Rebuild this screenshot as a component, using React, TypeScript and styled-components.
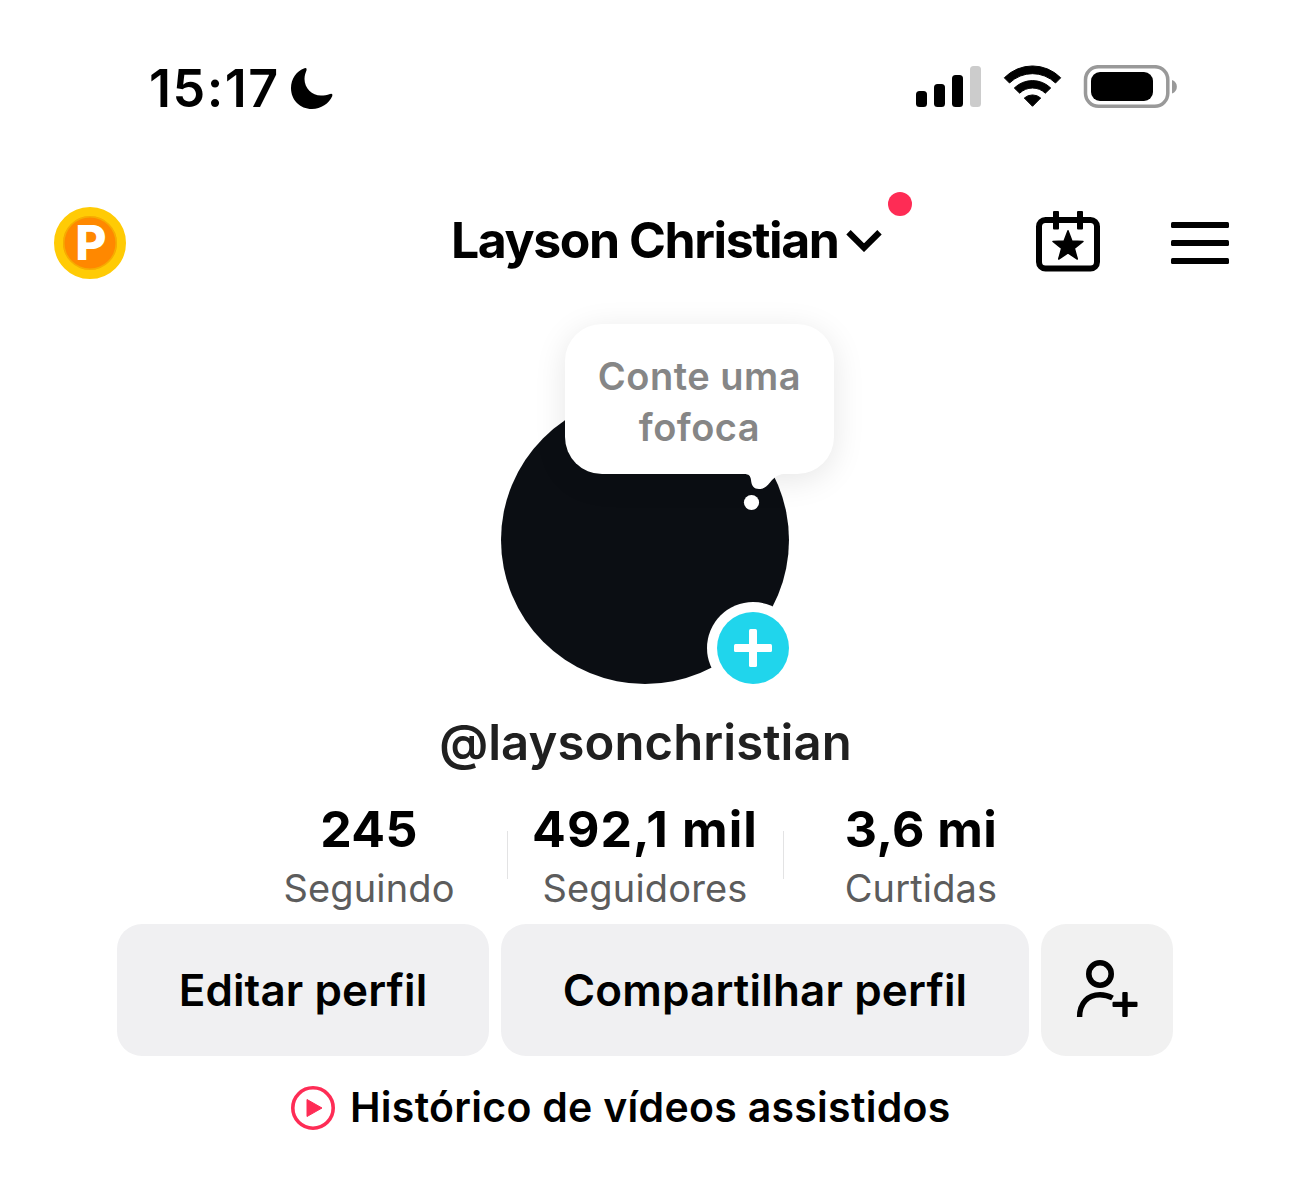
import React from "react";
import styled, { createGlobalStyle } from "styled-components";

const GlobalStyle = createGlobalStyle`
  * { box-sizing: border-box; }
  body { margin: 0; background: #fff; }
`;

const Page = styled.main`
  width: 1290px;
  height: 1193px;
  overflow: hidden;
  display: flex;
  flex-direction: column;
  align-items: center;
  background: #fff;
  color: #000;
  font-family: Inter, "Liberation Sans", sans-serif;
`;

const Label = styled.span<{ $size: number; $weight: number; $track?: number; $color?: string; $line?: number }>`
  font-size: ${(p) => p.$size}px;
  font-weight: ${(p) => p.$weight};
  letter-spacing: ${(p) => p.$track ?? 0}px;
  color: ${(p) => p.$color ?? "#000"};
  line-height: ${(p) => p.$line ?? 60}px;
  white-space: nowrap;
`;

const Icon = styled.svg`
  display: block;
  flex: none;
`;

const StatusBar = styled.header`
  width: 100%;
  height: 176px;
  padding: 58px 113px 0 149px;
  display: flex;
  justify-content: space-between;
`;

const Clock = styled(Label)`
  padding-top: 3px;
`;

const Cluster = styled.div<{ $gap: number }>`
  display: flex;
  height: 58px;
  align-items: center;
  gap: ${(p) => p.$gap}px;
`;

const NavBar = styled.nav`
  width: 100%;
  height: 134px;
  padding: 0 61px 0 54px;
  display: grid;
  grid-template-columns: 397px 1fr auto;
  align-items: center;
`;

const Coin = styled.div`
  width: 72px;
  height: 72px;
  border-radius: 50%;
  border: 9px solid #ffcb05;
  background: #ff8800;
  box-shadow: inset 0 0 0 1.5px #f5ae00;
  display: flex;
  align-items: center;
  justify-content: center;
  padding-left: 2px;
`;

const Account = styled.div`
  position: relative;
  width: 461px;
  display: flex;
  align-items: center;
  justify-content: space-between;
  padding-right: 30px;
  margin-top: -7px;
`;

const NoticeDot = styled.i`
  position: absolute;
  right: 0;
  top: -18px;
  width: 24px;
  height: 24px;
  border-radius: 50%;
  background: #fe2c55;
`;

const AvatarArea = styled.section`
  position: relative;
  width: 288px;
  height: 288px;
  margin-top: 86px;
`;

const Avatar = styled.div`
  width: 288px;
  height: 288px;
  border-radius: 50%;
  background: #0b0e13;
`;

const Bubble = styled.div`
  position: absolute;
  left: 64px;
  top: -72px;
  width: 269px;
  height: 150px;
  border-radius: 37px;
  background: #fff;
  box-shadow: 0 6px 32px rgba(0, 0, 0, 0.1);
  display: flex;
  flex-direction: column;
  align-items: center;
  padding-top: 27px;
`;

const Tail = styled.svg`
  position: absolute;
  left: 176px;
  top: 149px;
`;

const AddBadge = styled.div`
  position: absolute;
  right: 0;
  bottom: 0;
  width: 72px;
  height: 72px;
  border-radius: 50%;
  background: #20d5ec;
  box-shadow: 0 0 0 10px #fff;
  display: flex;
  align-items: center;
  justify-content: center;
`;

const Handle = styled.div`
  height: 115px;
  padding: 29px 0 0 1px;
`;

const Stats = styled.section`
  display: grid;
  grid-template-columns: repeat(3, 276px);
  height: 125px;
`;

const Stat = styled.div<{ $divided: boolean }>`
  display: flex;
  flex-direction: column;
  align-items: center;
  background: ${(p) => (p.$divided ? "linear-gradient(#e3e3e4, #e3e3e4) 0 32px / 1px 48px no-repeat" : "none")};
`;

const Actions = styled.section`
  display: grid;
  grid-template-columns: 372px 528px 132px;
  gap: 12px;
`;

const Button = styled.button<{ $bg?: string }>`
  height: 132px;
  border: 0;
  padding: 0;
  border-radius: 25px;
  background: ${(p) => p.$bg ?? "#f0f0f2"};
  display: flex;
  align-items: center;
  justify-content: center;
  font-family: inherit;
`;

const History = styled.a`
  display: flex;
  align-items: center;
  gap: 15px;
  width: 708px;
  margin-top: 21px;
`;

const HistoryLabel = styled(Label)`
  padding-bottom: 2px;
`;

const stats = [
  { value: "245", label: "Seguindo", track: 0.3 },
  { value: "492,1 mil", label: "Seguidores", track: 1.1 },
  { value: "3,6 mi", label: "Curtidas", track: 0.4 },
];

export default function App() {
  return (
    <Page>
      <GlobalStyle />
      <StatusBar>
        <Cluster $gap={10}>
          <Clock $size={52} $weight={600} $track={1.5}>15:17</Clock>
          <Icon width="44" height="44" viewBox="290 65 44 44">
            <path d="M304.500 68.300C296.500 71 291 79 291 88C291 100 300 109 312 109C321 109 329 103.500 332.300 96Q333 93 330 94C327 95.300 324 95.500 321 95.500C312 95.500 304.500 88 304.500 79C304.500 75.500 305.500 73 306.600 70Q307 67.500 304.500 68.300Z" />
          </Icon>
        </Cluster>
        <Cluster $gap={21}>
          <Icon width="66" height="42" viewBox="916 66 66 42">
            <rect x="916" y="91" width="11" height="16" rx="3.500" />
            <rect x="934" y="84" width="11" height="23" rx="3.500" />
            <rect x="952" y="75" width="11" height="32" rx="3.500" />
            <rect x="970" y="66" width="11" height="41" rx="3.500" fill="#ccc" />
          </Icon>
          <Icon width="59" height="44" viewBox="1003 65 59 44">
            <path stroke="#000" strokeWidth="1" strokeLinejoin="round" d="M1004.300 77.800A39.500 39.500 0 0 1 1060.700 77.800L1055.500 83A33 33 0 0 0 1009.500 83ZM1014.300 88A26 26 0 0 1 1050.700 88L1045.300 93.200A18.500 18.500 0 0 0 1019.700 93.200ZM1024.300 98A12.500 12.500 0 0 1 1040.700 98L1032.500 106.300Z" />
          </Icon>
          <Icon width="94" height="44" viewBox="1083 65 94 44">
            <rect x="1085.500" y="66.700" width="82.300" height="39.600" rx="13" fill="none" stroke="#999" strokeWidth="3.500" />
            <rect x="1091" y="72" width="62" height="29" rx="9" />
            <path d="M1172 80C1178.500 82 1178.500 91.500 1172 93.500Z" fill="#999" />
          </Icon>
        </Cluster>
      </StatusBar>

      <NavBar>
        <Coin><Label $size={48} $weight={800} $color="#fff">P</Label></Coin>
        <Account>
          <Label $size={50} $weight={700} $track={-1.45}>Layson Christian</Label>
          <Icon width="37" height="24" viewBox="845 228 37 24">
            <path d="M848.500 232.200L864 247.700L879.500 232.200" fill="none" stroke="#000" strokeWidth="6.200" />
          </Icon>
          <NoticeDot />
        </Account>
        <Cluster $gap={71}>
          <Icon width="64" height="64" viewBox="1036 211 64 64">
            <rect x="1039" y="220" width="58" height="48.500" rx="6.500" fill="none" stroke="#000" strokeWidth="6" />
            <rect x="1053" y="211" width="6" height="18.500" rx="1" />
            <rect x="1077" y="211" width="6" height="18.500" rx="1" />
            <path stroke="#000" strokeWidth="1.500" strokeLinejoin="round" d="M1068 230.700L1071.900 241.100L1083 241.500L1074.300 248.300L1077.300 259L1068 252.900L1058.700 259L1061.700 248.300L1053 241.500L1064.100 241.100Z" />
          </Icon>
          <Icon width="58" height="42" viewBox="0 0 58 42">
            <rect width="58" height="6" rx="1.500" />
            <rect y="18" width="58" height="6" rx="1.500" />
            <rect y="36" width="58" height="6" rx="1.500" />
          </Icon>
        </Cluster>
      </NavBar>

      <AvatarArea>
        <Avatar />
        <Bubble>
          <Label $size={38} $weight={600} $track={0.5} $color="#868686" $line={51}>Conte uma</Label>
          <Label $size={38} $weight={600} $track={0.5} $color="#868686" $line={51}>fofoca</Label>
          <Tail width="44" height="40" viewBox="741 473 44 40">
            <path fill="#fff" d="M741 473V474H744C749 474 750.500 476 751 480C751.500 486 754 489 759 489C764 489 766.500 486.500 770 482.500C774 478 777 474.500 784 474V473Z" />
            <circle cx="751.500" cy="502.500" r="7.600" fill="#fff" />
          </Tail>
        </Bubble>
        <AddBadge>
          <Icon width="38" height="38" viewBox="0 0 38 38" fill="#fff">
            <rect x="15" width="8" height="38" rx="1.500" />
            <rect y="15" width="38" height="8" rx="1.500" />
          </Icon>
        </AddBadge>
      </AvatarArea>

      <Handle><Label $size={49} $weight={600} $track={0.1} $color="#202020">@laysonchristian</Label></Handle>

      <Stats>
        {stats.map((s, i) => (
          <Stat key={s.label} $divided={i > 0}>
            <Label $size={50} $weight={700} $track={s.track}>{s.value}</Label>
            <Label $size={38} $weight={400} $track={0.15} $color="#5c5c5c" $line={58}>{s.label}</Label>
          </Stat>
        ))}
      </Stats>

      <Actions>
        <Button><Label $size={44} $weight={600} $track={0.1}>Editar perfil</Label></Button>
        <Button><Label $size={44} $weight={600} $track={0.15}>Compartilhar perfil</Label></Button>
        <Button $bg="#f1f1f1" aria-label="Adicionar amigos">
          <Icon width="62" height="60" viewBox="1076 960 62 60">
            <circle cx="1100" cy="974" r="11.200" fill="none" stroke="#000" strokeWidth="5.600" />
            <path d="M1079.600 1017C1079.600 1003 1088 994.800 1100 994.800C1104.500 994.800 1108.500 995.800 1112.500 998" fill="none" stroke="#000" strokeWidth="5.400" />
            <rect x="1112.500" y="1001.800" width="25" height="5.200" rx="1" />
            <rect x="1122.300" y="992" width="5.400" height="25" rx="1" />
          </Icon>
        </Button>
      </Actions>

      <History>
        <Icon width="44" height="44" viewBox="0 0 44 44">
          <circle cx="22" cy="22" r="20.200" fill="none" stroke="#fe2c55" strokeWidth="3.600" />
          <path d="M16 13.500L31 22L16 30.500Z" fill="#fe2c55" stroke="#fe2c55" strokeWidth="1" strokeLinejoin="round" />
        </Icon>
        <HistoryLabel $size={41} $weight={600} $track={0.28}>Histórico de vídeos assistidos</HistoryLabel>
      </History>
    </Page>
  );
}
